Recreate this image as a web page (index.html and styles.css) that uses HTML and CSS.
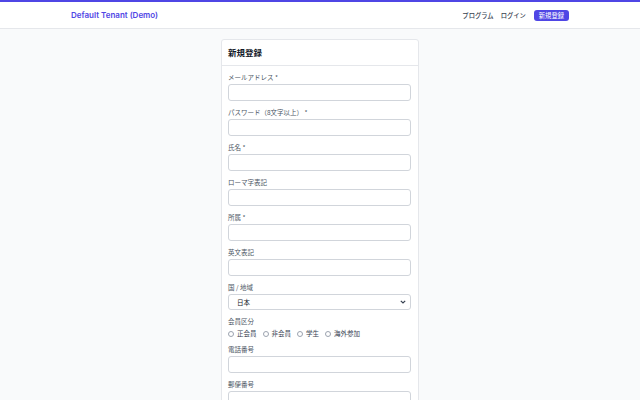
FILE: index.html
```html
<!DOCTYPE html>
<html lang="ja">
<head>
<meta charset="utf-8">
<title>新規登録</title>
<link rel="stylesheet" href="styles.css">
</head>
<body>
<header class="topbar">
  <div class="container nav">
    <a class="brand" href="#">Default Tenant (Demo)</a>
    <nav class="links">
      <a href="#">プログラム</a>
      <a href="#">ログイン</a>
      <a class="btn" href="#">新規登録</a>
    </nav>
  </div>
</header>
<main class="main">
  <section class="card">
    <div class="card-head">新規登録</div>
    <form class="card-body">
      <div class="field"><label>メールアドレス *</label><input type="text"></div>
      <div class="field"><label>パスワード（8文字以上） *</label><input type="password"></div>
      <div class="field"><label>氏名 *</label><input type="text"></div>
      <div class="field"><label>ローマ字表記</label><input type="text"></div>
      <div class="field"><label>所属 *</label><input type="text"></div>
      <div class="field"><label>英文表記</label><input type="text"></div>
      <div class="field"><label>国 / 地域</label>
        <div class="select"><span>日本</span>
          <svg width="6" height="4" viewBox="0 0 6 4"><path d="M0.8 0.8 L3 3 L5.2 0.8" fill="none" stroke="#374151" stroke-width="1.2"/></svg>
        </div>
      </div>
      <div class="field"><label>会員区分</label>
        <div class="radios">
          <span class="radio"><i></i>正会員</span>
          <span class="radio"><i></i>非会員</span>
          <span class="radio"><i></i>学生</span>
          <span class="radio"><i></i>海外参加</span>
        </div>
      </div>
      <div class="field"><label>電話番号</label><input type="text"></div>
      <div class="field"><label>郵便番号</label><input type="text"></div>
    </form>
  </section>
</main>
</body>
</html>
```
FILE: styles.css
```css
* { box-sizing: border-box; }
html, body { margin: 0; padding: 0; }
body {
  background: #f9fafb;
  font-family: Inter, "Noto Sans CJK JP", sans-serif;
  color: #374151;
  height: 400px;
  overflow: hidden;
}
.topbar {
  background: #fff;
  border-top: 2px solid #4f46e5;
  border-bottom: 1px solid #e5e7eb;
  height: 29px;
}
.container {
  width: 512px;
  margin: 0 auto;
  padding: 0 7px;
}
.nav {
  height: 26px;
  display: flex;
  align-items: center;
  justify-content: space-between;
}
.brand {
  color: #4f46e5;
  font-weight: 600;
  font-size: 8px;
  text-decoration: none;
}
.links {
  display: flex;
  align-items: center;
  gap: 7px;
  font-family: "Noto Sans CJK JP", sans-serif;
  font-size: 6.3px;
  font-weight: 500;
}
.links a { color: #374151; text-decoration: none; }
.links a.btn {
  background: #4f46e5;
  color: #fff;
  border-radius: 3px;
  padding: 1px 5px;
  line-height: 9px;
  font-weight: 400;
  margin-left: 1px;
}
.main {
  display: flex;
  justify-content: center;
  padding-top: 10px;
}
.card {
  width: 198px;
  background: #fff;
  border: 1px solid #e5e7eb;
  border-radius: 3px;
  font-family: "Noto Sans CJK JP", sans-serif;
}
.card-head {
  height: 26px;
  border-bottom: 1px solid #e5e7eb;
  padding: 0 6px 1px;
  display: flex;
  align-items: center;
  font-size: 8.5px;
  font-weight: 700;
  color: #111827;
}
.card-body {
  padding: 7px 7px 10px 6px;
  display: flex;
  flex-direction: column;
  gap: 7px;
}
.field {
  display: flex;
  flex-direction: column;
  gap: 2px;
}
.field label {
  font-size: 6.5px;
  line-height: 9px;
  color: #4b5563;
}
.field input {
  height: 17px;
  border: 1px solid #d1d5db;
  border-radius: 3px;
  background: #fff;
  padding: 0 4px;
  font-size: 7px;
  width: 100%;
}
.select {
  height: 16px;
  border: 1px solid #d1d5db;
  border-radius: 3px;
  display: flex;
  align-items: center;
  justify-content: space-between;
  padding: 0 4px 0 8px;
  font-size: 6.5px;
  color: #111827;
}
.radios {
  display: flex;
  align-items: center;
  gap: 6px;
  font-size: 6.5px;
  line-height: 9px;
  color: #374151;
  padding-top: 1px;
}
.radio {
  display: flex;
  align-items: center;
  gap: 3px;
}
.radio i {
  width: 6px;
  height: 6px;
  border: 1px solid #9ca3af;
  border-radius: 50%;
  display: inline-block;
}
```
